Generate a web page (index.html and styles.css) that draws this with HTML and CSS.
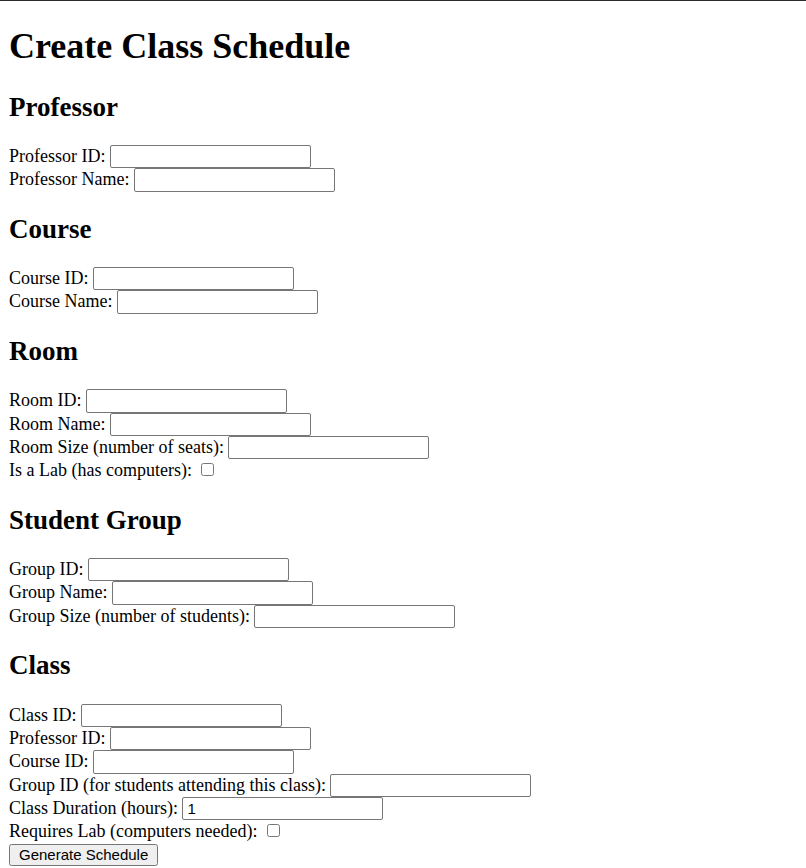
FILE: index.html
```html
<!DOCTYPE html>
<html>
<head>
<meta charset="utf-8">
<title>Create Class Schedule</title>
<link rel="stylesheet" href="styles.css">
</head>
<body>
<h1>Create Class Schedule</h1>
<form class="schedule-form">
<h2>Professor</h2>
<label>Professor ID:</label> <input type="text" class="field"><br>
<label>Professor Name:</label> <input type="text" class="field"><br>
<h2>Course</h2>
<label>Course ID:</label> <input type="text" class="field"><br>
<label>Course Name:</label> <input type="text" class="field"><br>
<h2>Room</h2>
<label>Room ID:</label> <input type="text" class="field"><br>
<label>Room Name:</label> <input type="text" class="field"><br>
<label>Room Size (number of seats):</label> <input type="number" class="field"><br>
<label>Is a Lab (has computers):</label> <input type="checkbox" class="check"><br>
<h2>Student Group</h2>
<label>Group ID:</label> <input type="text" class="field"><br>
<label>Group Name:</label> <input type="text" class="field"><br>
<label>Group Size (number of students):</label> <input type="number" class="field"><br>
<h2>Class</h2>
<label>Class ID:</label> <input type="text" class="field"><br>
<label>Professor ID:</label> <input type="text" class="field"><br>
<label>Course ID:</label> <input type="text" class="field"><br>
<label>Group ID (for students attending this class):</label> <input type="text" class="field"><br>
<label>Class Duration (hours):</label> <input type="number" class="field" value="1"><br>
<label>Requires Lab (computers needed):</label> <input type="checkbox" class="check"><br>
<button type="button" class="submit">Generate Schedule</button>
</form>
</body>
</html>
```
FILE: styles.css
```css
html {
  border-top: 1px solid #2b2b2b;
}
body {
  margin: 9px;
  font-family: "Liberation Serif", "Times New Roman", serif;
  font-size: 18px;
  color: #000;
}
h1 {
  font-size: 36px;
  line-height: normal;
  margin: 15px 0 24.5px;
}
.schedule-form {
  line-height: 22px;
}
.schedule-form h2 {
  font-size: 27px;
  line-height: normal;
  margin: 22px 0 22.5px;
}
.field {
  box-sizing: border-box;
  width: 201px;
  height: 23.33px;
  margin: 0;
  padding: 1px 4px;
  border: 1px solid #767676;
  border-radius: 2px;
  vertical-align: top;
  font-family: "Liberation Sans", Arial, sans-serif;
  font-size: 15px;
  color: #000;
  background: #fff;
}
.check {
  width: 13px;
  height: 13px;
  margin: 4px 3px 6.33px 5px;
  vertical-align: top;
}
.submit {
  box-sizing: border-box;
  height: 22.5px;
  margin: 0;
  padding: 0 8px;
  vertical-align: top;
  font-family: "Liberation Sans", Arial, sans-serif;
  font-size: 15px;
  line-height: normal;
}
```
